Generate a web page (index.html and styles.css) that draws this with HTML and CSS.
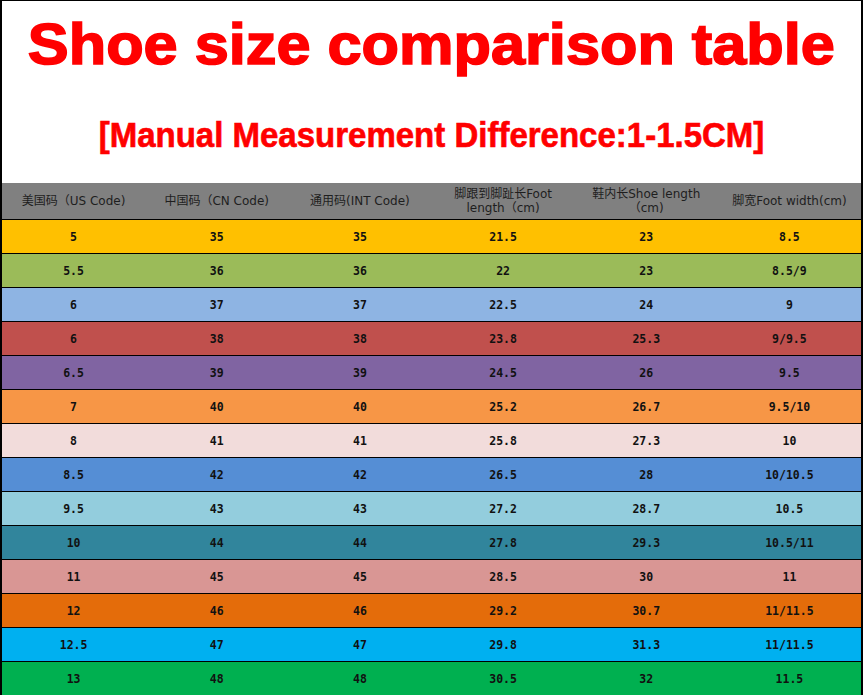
FILE: index.html
```html
<!DOCTYPE html>
<html lang="en">
<head>
<meta charset="utf-8">
<title>Shoe size comparison table</title>
<link rel="stylesheet" href="styles.css">
</head>
<body>
<div class="sheet">
  <header class="banner">
    <h1 class="title"><span class="title-text">Shoe size comparison table</span></h1>
    <p class="subtitle"><span class="subtitle-text">[Manual Measurement Difference:1-1.5CM]</span></p>
  </header>
  <div class="grid">
    <div class="row head">
      <div class="cell">美国码（US Code)</div>
      <div class="cell">中国码（CN Code)</div>
      <div class="cell">通用码(INT Code)</div>
      <div class="cell">脚跟到脚趾长Foot length（cm)</div>
      <div class="cell">鞋内长Shoe length（cm)</div>
      <div class="cell">脚宽Foot width(cm)</div>
    </div>
    <div class="row r1"><div class="cell">5</div><div class="cell">35</div><div class="cell">35</div><div class="cell">21.5</div><div class="cell">23</div><div class="cell">8.5</div></div>
    <div class="row r2"><div class="cell">5.5</div><div class="cell">36</div><div class="cell">36</div><div class="cell">22</div><div class="cell">23</div><div class="cell">8.5/9</div></div>
    <div class="row r3"><div class="cell">6</div><div class="cell">37</div><div class="cell">37</div><div class="cell">22.5</div><div class="cell">24</div><div class="cell">9</div></div>
    <div class="row r4"><div class="cell">6</div><div class="cell">38</div><div class="cell">38</div><div class="cell">23.8</div><div class="cell">25.3</div><div class="cell">9/9.5</div></div>
    <div class="row r5"><div class="cell">6.5</div><div class="cell">39</div><div class="cell">39</div><div class="cell">24.5</div><div class="cell">26</div><div class="cell">9.5</div></div>
    <div class="row r6"><div class="cell">7</div><div class="cell">40</div><div class="cell">40</div><div class="cell">25.2</div><div class="cell">26.7</div><div class="cell">9.5/10</div></div>
    <div class="row r7"><div class="cell">8</div><div class="cell">41</div><div class="cell">41</div><div class="cell">25.8</div><div class="cell">27.3</div><div class="cell">10</div></div>
    <div class="row r8"><div class="cell">8.5</div><div class="cell">42</div><div class="cell">42</div><div class="cell">26.5</div><div class="cell">28</div><div class="cell">10/10.5</div></div>
    <div class="row r9"><div class="cell">9.5</div><div class="cell">43</div><div class="cell">43</div><div class="cell">27.2</div><div class="cell">28.7</div><div class="cell">10.5</div></div>
    <div class="row r10"><div class="cell">10</div><div class="cell">44</div><div class="cell">44</div><div class="cell">27.8</div><div class="cell">29.3</div><div class="cell">10.5/11</div></div>
    <div class="row r11"><div class="cell">11</div><div class="cell">45</div><div class="cell">45</div><div class="cell">28.5</div><div class="cell">30</div><div class="cell">11</div></div>
    <div class="row r12"><div class="cell">12</div><div class="cell">46</div><div class="cell">46</div><div class="cell">29.2</div><div class="cell">30.7</div><div class="cell">11/11.5</div></div>
    <div class="row r13"><div class="cell">12.5</div><div class="cell">47</div><div class="cell">47</div><div class="cell">29.8</div><div class="cell">31.3</div><div class="cell">11/11.5</div></div>
    <div class="row r14"><div class="cell">13</div><div class="cell">48</div><div class="cell">48</div><div class="cell">30.5</div><div class="cell">32</div><div class="cell">11.5</div></div>
  </div>
</div>
</body>
</html>
```
FILE: styles.css
```css
html, body {
  margin: 0;
  padding: 0;
  background: #ffffff;
}

.sheet {
  box-sizing: border-box;
  width: 863px;
  border-top: 1px solid #000;
  border-left: 2px solid #000;
  border-right: 2px solid #000;
  background: #ffffff;
}

.banner {
  height: 182px;
  box-sizing: border-box;
  padding-top: 15px;
  text-align: center;
  font-family: "Liberation Sans", Arial, sans-serif;
  font-weight: bold;
  color: #ff0000;
}

.title {
  margin: 0;
  font-size: 57px;
  line-height: 57px;
  font-weight: bold;
}

.title-text {
  display: inline-block;
  transform: scaleX(1.075);
  -webkit-text-stroke: 1.6px #ff0000;
}

.subtitle {
  margin: 45px 0 0;
  font-size: 33px;
  line-height: 33px;
}

.subtitle-text {
  display: inline-block;
  transform: scaleY(1.08);
  -webkit-text-stroke: 0.6px #ff0000;
}

.grid {
  display: flex;
  flex-direction: column;
}

.row {
  display: grid;
  grid-template-columns: repeat(6, 1fr);
  height: 34px;
  box-sizing: border-box;
  border-top: 1px solid #000;
  align-items: center;
  text-align: center;
  font-family: "DejaVu Sans Mono", "Liberation Mono", monospace;
  font-weight: bold;
  font-size: 11.5px;
  color: #111;
}

.row.head {
  height: 36px;
  border-top: none;
  background: #808080;
  font-family: "DejaVu Sans", "Noto Sans CJK SC", sans-serif;
  font-weight: normal;
  font-size: 12px;
  line-height: 14px;
  color: #1e1e1e;
}

.row.head .cell {
  padding: 0 10px;
}

.r1 { background: #ffc000; }
.r2 { background: #9bbb59; }
.r3 { background: #8eb4e3; }
.r4 { background: #c0504d; }
.r5 { background: #8064a2; }
.r6 { background: #f79646; }
.r7 { background: #f2dcdb; }
.r8 { background: #558ed5; }
.r9 { background: #93cddd; }
.r10 { background: #31859c; }
.r11 { background: #d99694; }
.r12 { background: #e46c0a; }
.r13 { background: #00b0f0; }
.r14 { background: #00b050; }
```
